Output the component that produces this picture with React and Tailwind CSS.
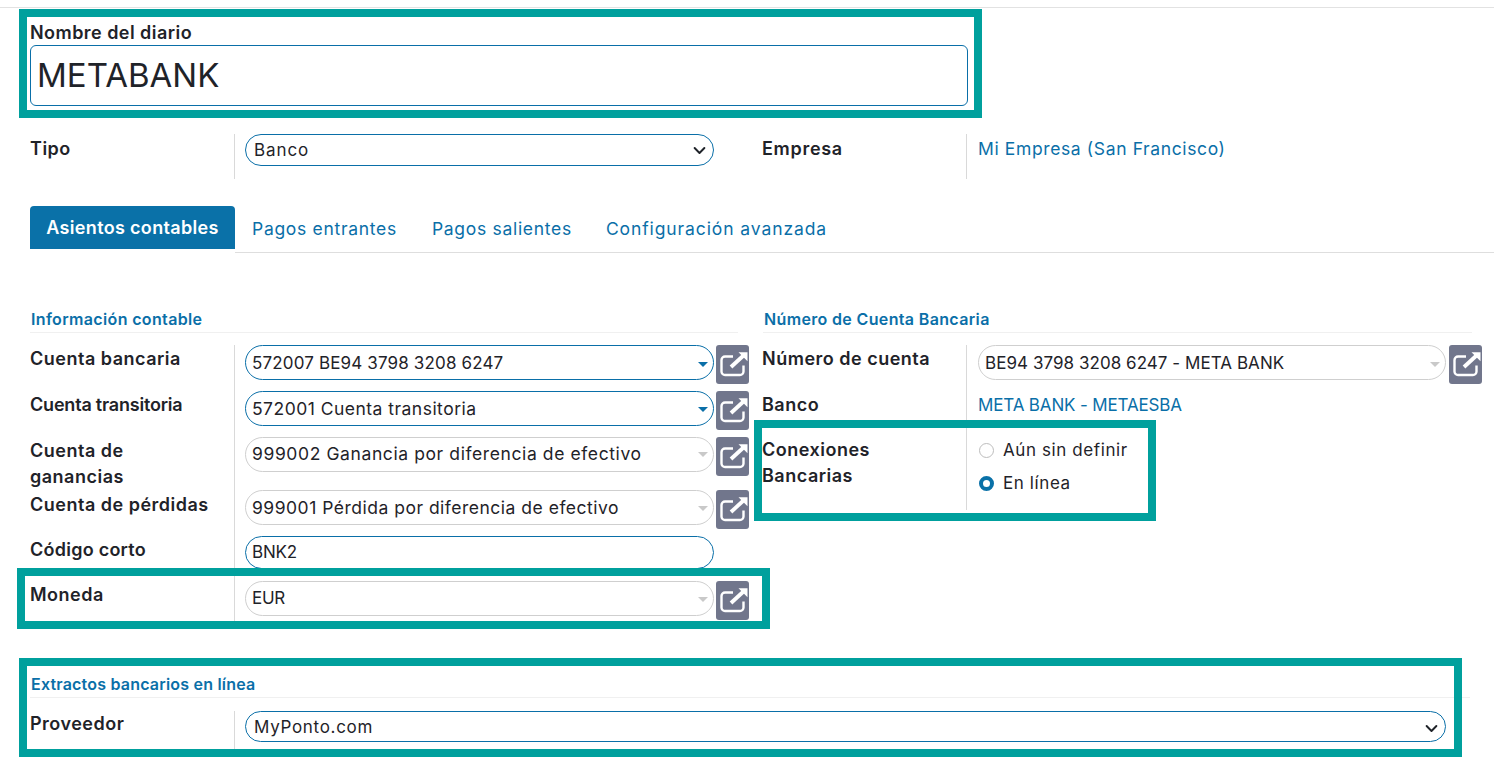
const blue = "text-[#0a6fa8]";

function OpenIcon() {
  return (
    <button className="w-[33px] h-[39px] shrink-0 rounded-[3px] bg-[#71768c] flex items-center justify-center">
      <svg className="overflow-visible" width="29" height="29" viewBox="0 0 29 29" fill="none" stroke="white" strokeWidth="2.4">
        <path d="M15 6.5H7a3.5 3.5 0 0 0-3.5 3.5v11.5a3.5 3.5 0 0 0 3.5 3.5h15a3.5 3.5 0 0 0 3.5-3.5v-6" />
        <path d="M13 17L25.5 5.5" strokeWidth="3.8" />
        <path d="M20.5 2.2h9v9z" fill="white" stroke="none" />
      </svg>
    </button>
  );
}

function Caret({ light }) {
  return (
    <span className={`ml-auto mr-[5px] w-0 h-0 border-x-[5px] border-x-transparent border-t-[5px] ${light ? "border-t-[#c9c9c9]" : "border-t-[#0a6fa8]"}`} />
  );
}

function Chevron() {
  return (
    <svg className="ml-auto mr-[7px]" width="13" height="13" viewBox="0 0 16 16" fill="none" stroke="#1f2329" strokeWidth="2.4" strokeLinecap="round" strokeLinejoin="round">
      <path d="M2 5l6 6 6-6" />
    </svg>
  );
}

function Field({ children, light, h = "h-[35px]", className = "", text = "text-[17px] tracking-[0.1px] pt-[1px]" }) {
  return (
    <div className={`${h} ${className} ${text} flex items-center rounded-[18px] border pl-[6px] text-[#1f2329] ${light ? "border-[#cfcfcf]" : "border-[#0a6fa8]"}`}>
      {children}
    </div>
  );
}

function Row({ label, height, children, labelClass = "tracking-[0.5px] pt-[1px]" }) {
  return (
    <div className="flex" style={{ height }}>
      <div className={`w-[204px] shrink-0 pr-2 text-[18px] leading-[26px] font-semibold text-[#1f2329] ${labelClass}`}>{label}</div>
      <div className="w-[515px] shrink-0 border-l border-[#d9d9d9] pl-[10px]">{children}</div>
    </div>
  );
}

function FieldRow({ label, height, value, light, text, labelClass, fieldH }) {
  return (
    <Row label={label} height={height} labelClass={labelClass}>
      <div className="flex items-start gap-[2px]">
        <Field light={light} h={fieldH} text={text} className="w-[469px] shrink-0">
          {value}
          <Caret light={light} />
        </Field>
        <OpenIcon />
      </div>
    </Row>
  );
}

function SectionTitle({ children, tracking = "tracking-[0.35px]" }) {
  return (
    <div className={`h-[28px] border-b border-[#f0f0f0] pl-[1px] text-[16px] font-semibold leading-[29px] ${tracking} ${blue}`}>{children}</div>
  );
}

function Frame({ className }) {
  return <div className={`absolute border-[8px] border-[#00a09d] pointer-events-none ${className}`} />;
}

export default function App() {
  return (
    <div className="relative h-[778px] overflow-hidden bg-white font-['Inter',sans-serif]">
      <div className="border-t border-[#e2e2e2] mt-[7px] pl-[30px]">
        <div className="pt-[14px] text-[18px] font-semibold leading-[21px] tracking-[0.45px] text-[#1f2329]">Nombre del diario</div>
        <div className="mt-[2px] w-[938px] h-[61px] rounded-[6px] border border-[#0a6fa8] pl-[6px] flex items-center text-[33px] text-[#1f2329]">METABANK</div>

        <div className="mt-[28px] flex">
          <div className="w-[732px]">
            <Row label="Tipo" height="45px" labelClass="tracking-[0.5px] pt-[2px]">
              <div className="flex h-[32px] w-[469px] items-center rounded-[16px] border border-[#0a6fa8] pl-[8px] pt-[1px] text-[17px] tracking-[0.9px] text-[#1f2329]">
                Banco
                <Chevron />
              </div>
            </Row>
          </div>
          <div>
            <Row label="Empresa" height="45px" labelClass="tracking-[0.7px] pt-[2px]">
              <div className={`pl-[1px] pt-[1px] text-[17.5px] leading-[27px] tracking-[0.62px] ${blue}`}>Mi Empresa (San Francisco)</div>
            </Row>
          </div>
        </div>

        <div className="mt-[27px] flex items-start">
          <div className="w-[205px] h-[43px] rounded-t-[4px] bg-[#0a71a8] text-white text-[18px] tracking-[0.33px] font-semibold flex items-center justify-center">Asientos contables</div>
          <div className={`flex-1 h-[47px] border-b border-[#dedede] pl-[17px] flex gap-[34px] text-[17.5px] tracking-[0.7px] leading-[45px] ${blue}`}>
            <span>Pagos entrantes</span>
            <span className="ml-[1px]">Pagos salientes</span>
            <span className="tracking-[0.9px]">Configuración avanzada</span>
          </div>
        </div>

        <div className="mt-[52px] flex">
          <div className="w-[708px]">
            <SectionTitle>Información contable</SectionTitle>
            <div className="mt-[12px]">
              <FieldRow label="Cuenta bancaria" height="46px" value="572007 BE94 3798 3208 6247" text="text-[17px] tracking-[0.15px] pt-[3px]" />
              <FieldRow label="Cuenta transitoria" height="46px" labelClass="tracking-[-0.2px] pt-[1px]" value="572001 Cuenta transitoria" text="text-[17.5px] tracking-[0.48px] pt-[1px]" />
              <FieldRow label="Cuenta de ganancias" height="53px" labelClass="tracking-[0.5px] pr-[60px] pt-[1px]" value="999002 Ganancia por diferencia de efectivo" text="text-[17.5px] tracking-[0.6px]" light />
              <FieldRow label="Cuenta de pérdidas" height="46px" labelClass="tracking-[0.5px] pt-[2px]" value="999001 Pérdida por diferencia de efectivo" text="text-[17.5px] tracking-[0.5px] pt-[1px]" light />
              <Row label="Código corto" height="45px" labelClass="tracking-[0.25px] pt-[1px]">
                <Field h="h-[33px]" className="w-[469px]" text="text-[17px] tracking-[-0.2px] pt-[1px]">BNK2</Field>
              </Row>
              <FieldRow label="Moneda" height="40px" value="EUR" text="text-[17px] tracking-[-0.3px] pt-[1px]" light />
            </div>
          </div>
          <div className="ml-[24px] w-[710px]">
            <div className="pl-[1px]"><SectionTitle>Número de Cuenta Bancaria</SectionTitle></div>
            <div className="mt-[12px]">
              <Row label="Número de cuenta" height="46px">
                <div className="flex items-start gap-[3px] pl-[1px]">
                  <Field light className="w-[468px] shrink-0" text="text-[17px] tracking-[0.05px] pt-[3px]">
                    BE94 3798 3208 6247 - META BANK
                    <Caret light />
                  </Field>
                  <OpenIcon />
                </div>
              </Row>
              <Row label="Banco" height="46px">
                <div className={`pl-[1px] pt-[1px] text-[17px] leading-[27px] tracking-[-0.15px] ${blue}`}>META BANK - METAESBA</div>
              </Row>
              <Row label="Conexiones Bancarias" height="73px" labelClass="tracking-[0.5px] pr-[60px]">
                <div className="pl-[2px] pt-[2px] flex flex-col gap-[10px] text-[17px] leading-[23px] tracking-[0.6px] text-[#1f2329]">
                  <label className="flex items-center gap-[9px]">
                    <span className="w-[15px] h-[15px] rounded-full border border-[#bdbdbd]" />
                    Aún sin definir
                  </label>
                  <label className="flex items-center gap-[9px]">
                    <span className="w-[15px] h-[15px] rounded-full border-[4px] border-[#0a71a8]" />
                    En línea
                  </label>
                </div>
              </Row>
            </div>
          </div>
        </div>

        <div className="mt-[49px] w-[1440px]">
          <SectionTitle tracking="tracking-[0.2px]">Extractos bancarios en línea</SectionTitle>
          <div className="mt-[13px]">
            <div className="flex h-[44px]">
              <div className="w-[204px] shrink-0 text-[18px] leading-[26px] font-semibold tracking-[0.5px] text-[#1f2329]">Proveedor</div>
              <div className="flex-1 border-l border-[#d9d9d9] pl-[10px]">
                <div className="flex h-[31px] w-[1201px] items-center rounded-[16px] border border-[#0a6fa8] pl-[8px] pt-[3px] text-[17px] tracking-[0.7px] text-[#1f2329]">
                  MyPonto.com
                  <Chevron />
                </div>
              </div>
            </div>
          </div>
        </div>
      </div>

      <Frame className="left-[19px] top-[9px] w-[963px] h-[109px]" />
      <Frame className="left-[754px] top-[420px] w-[402px] h-[101px]" />
      <Frame className="left-[17px] top-[568px] w-[753px] h-[61px]" />
      <Frame className="left-[19px] top-[658px] w-[1443px] h-[99px]" />
    </div>
  );
}
